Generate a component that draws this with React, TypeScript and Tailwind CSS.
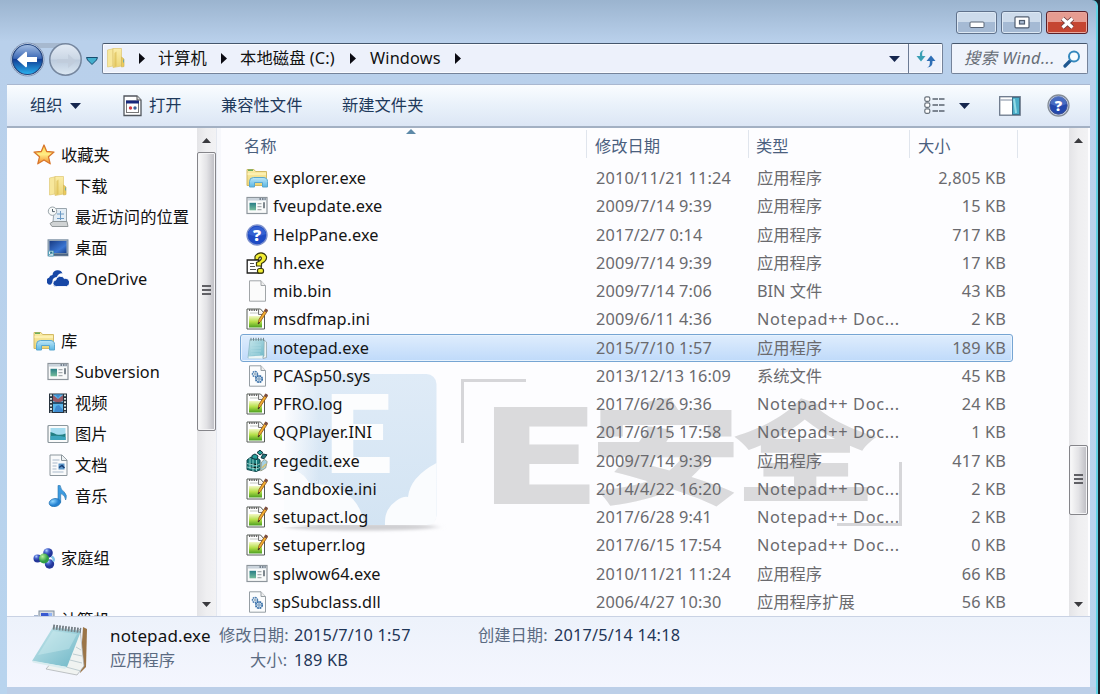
import React from "react";

type IconProps = { kind: string };

function Icon({ kind }: IconProps) {
  const p = { width: 22, height: 22, viewBox: "0 0 22 22", className: "shrink-0 block" };
  switch (kind) {
    case "star":
      return (
        <svg {...p}>
          <path d="M11 1l2.700 6.500 7.300.6-5.500 4.700 1.700 7-6.200-3.800-6.200 3.800 1.700-7L1 8.100l7.300-.6z" fill="url(#gStar)" stroke="#d8762c" strokeWidth="1.300" strokeLinejoin="round" />
        </svg>
      );
    case "folder":
      return (
        <svg {...p}>
          <path d="M2.500 3L8 1.800V19l-5.500 1z" fill="#f7e79c" stroke="#e0ca78" strokeWidth=".7" />
          <path d="M8 1.500h8.500V19L8 20.500z" fill="url(#gFold)" stroke="#dfc670" strokeWidth=".7" />
          <path d="M9.500 6l2-1.500v14.500l-2 1z" fill="#d9b94c" opacity=".6" />
          <path d="M16.500 10l2.500 2v7.500l-2.500.5z" fill="#eccb5b" stroke="#d2b659" strokeWidth=".7" />
          <path d="M18.500 12.500v3" stroke="#6fa9a4" strokeWidth="1" />
        </svg>
      );
    case "recent":
      return (
        <svg {...p}>
          <path d="M7 2.500h12.500v14H6z" fill="#e3edf5" stroke="#9aa5ad" />
          <path d="M10 8h7M10 12.500h7M13.500 5v9" stroke="#6d9ac4" fill="none" />
          <path d="M3 17.500l3-2h14l1 5H5z" fill="#d0d3d4" stroke="#92989a" />
          <circle cx="5.500" cy="5.200" r="4.200" fill="#f8fafa" stroke="#98a3a9" />
          <path d="M5.500 3V5.600H7.800" fill="none" stroke="#52616c" />
        </svg>
      );
    case "desktop":
      return (
        <svg {...p}>
          <rect x="1" y="2.800" width="20" height="16" fill="#9aaabb" stroke="#8094a8" />
          <rect x="2.500" y="4" width="17" height="12" fill="url(#gDesk)" />
          <rect x="1" y="16.500" width="20" height="2.200" fill="#4d6584" />
          <path d="M1.500 14h5v5h-5z" fill="#e8f4fa" stroke="#5aa2ba" />
          <path d="M2.500 17.800L5 15.300m-2 0h2v2" stroke="#1b6b88" fill="none" />
        </svg>
      );
    case "onedrive":
      return (
        <svg {...p}>
          <path d="M4 16.500A3.500 3.500 0 012 9.800 4 4 0 015.500 7a5.200 5.200 0 0110-1.500 4.600 4.600 0 00-5.500 3.300C6.300 9.300 5.200 12 5.500 14z" fill="#1747a6" />
          <path d="M9.500 18.500a3.200 3.200 0 01-.7-6.400 4.600 4.600 0 018.500-1.600 4 4 0 012.200 8z" fill="#1747a6" stroke="#fdfdff" strokeWidth=".9" />
        </svg>
      );
    case "library":
      return (
        <svg {...p}>
          <path d="M1 2.500h7l1.500 2H20.500V18.500H1z" fill="url(#gFold)" stroke="#d3ba66" />
          <path d="M2 3.200h5" stroke="#6fae5c" strokeWidth="1.600" />
          <path d="M1.500 7h18.500" stroke="#fff3bb" strokeWidth="1.500" />
          <path d="M3.500 20v-5.500Q3.500 10.500 7.500 10.500h9.500q4.500 0 4.500 4V20h-5v-4.500H8.500V20z" fill="url(#gBlue)" stroke="#5aa7cf" strokeWidth="1" />
        </svg>
      );
    case "app":
      return (
        <svg {...p}>
          <rect x="1" y="2.500" width="20" height="16" fill="#f9fafa" stroke="#8d959c" strokeWidth="1.200" />
          <path d="M2 4.300h18" stroke="#c9d2db" strokeWidth="2.500" />
          <path d="M13.500 4h1.500M16 4h1.500M18.500 4h1.200" stroke="#5c6878" strokeWidth="1.500" />
          <rect x="3.500" y="7.800" width="6.500" height="7.500" fill="url(#gTeal)" />
          <path d="M11.500 8.700h4M11.500 11.700h4M11.500 14.700h4" stroke="#a8adb0" strokeWidth="1.200" />
          <path d="M18 7.200v6" stroke="#54606a" strokeWidth="1.500" />
        </svg>
      );
    case "video":
      return (
        <svg {...p}>
          <rect x="2" y="1.500" width="18" height="19.500" fill="#28333e" />
          <rect x="6" y="2.500" width="10" height="17.500" fill="#5bb5e8" />
          <path d="M6 3l5 4 5-4v6l-5 2-5-2z" fill="#985a66" />
          <path d="M8 2.500h6l-3 3.500zM7 20l2-6 3-1 4 5v2z" fill="#3f8bd0" />
          <path d="M6 11h10" stroke="#173752" strokeWidth="1.500" />
          <path d="M4 2.500v18M18 2.500v18" stroke="#dce7e5" strokeWidth="2" strokeDasharray="1.800 1.600" />
        </svg>
      );
    case "picture":
      return (
        <svg {...p}>
          <rect x="1" y="2.500" width="20" height="17" rx="1" fill="#fafbfb" stroke="#8b969c" strokeWidth="1.200" />
          <rect x="3.500" y="5" width="15" height="12" fill="#a5dcf0" />
          <path d="M3.500 9q4 1 6 2.500 5 1 9-1V17h-15z" fill="#237f83" />
          <path d="M3.500 13q7-1 15 1v3h-15z" fill="#3da5bd" />
        </svg>
      );
    case "document":
      return (
        <svg {...p}>
          <path d="M3 1h12l5 5v15.500H3z" fill="#f9fafb" stroke="#8c969d" />
          <path d="M14.500 1v5.500H20" fill="#edf1f3" stroke="#8c969d" />
          <path d="M5.500 6h7M5.500 9h5M5.500 12h4M5.500 15h4M5.500 18h11" stroke="#a9b9cb" />
          <path d="M11.500 9.500h6v6h-6z" fill="#5d97c9" />
          <path d="M12 13.500l3-2 2.500 2.500" stroke="#173d75" strokeWidth="1.500" fill="none" />
        </svg>
      );
    case "music":
      return (
        <svg {...p}>
          <path d="M11 .5h2.200q.5 4 4 6.500 3.500 3 1.500 8-.5-5-5-6.500V17.500H11z" fill="#3d9be0" stroke="#2b76ad" strokeWidth=".6" />
          <ellipse cx="7.800" cy="17.500" rx="5.700" ry="4" fill="url(#gNote)" stroke="#2373b5" strokeWidth=".7" transform="rotate(-12 8 17.500)" />
        </svg>
      );
    case "homegroup":
      return (
        <svg {...p}>
          <circle cx="4.500" cy="11.500" r="4" fill="url(#gBall)" />
          <circle cx="15" cy="6" r="4.800" fill="url(#gBall)" />
          <circle cx="16.500" cy="17" r="4.700" fill="url(#gBall)" />
          <path d="M18.500 9.500q3.500 2 1.500 5" stroke="#7fc3e6" strokeWidth="2.500" fill="none" />
          <circle cx="11" cy="11.500" r="5" fill="url(#gGreen)" />
        </svg>
      );
    case "computer":
      return (
        <svg {...p}>
          <rect x="6" y="2" width="15" height="12" fill="#d7dce2" stroke="#7d8b9c" />
          <rect x="8" y="4" width="11" height="9" fill="#3859d1" />
          <path d="M15 4h4v9h-2z" fill="#90b3f4" />
          <path d="M1 6h4v10H1z" fill="#a5b5d0" />
        </svg>
      );
    case "help":
      return (
        <svg {...p}>
          <circle cx="11" cy="11" r="10" fill="#1f4bc4" stroke="#7c90cc" strokeWidth="1.400" />
          <path d="M2 10a9.200 9.200 0 0118 0q-9 4-18 0z" fill="#4675de" opacity=".55" />
          <text x="11" y="17" textAnchor="middle" fontFamily="Open Sans, sans-serif" fontWeight="800" fontSize="16" fill="#fff">?</text>
        </svg>
      );
    case "hh":
      return (
        <svg {...p}>
          <path d="M1.200 8h11l3 3v10h-14z" fill="#fff" stroke="#202020" strokeWidth="1.300" />
          <path d="M4 11.500h4M4 14.500h5M4 17.500h6" stroke="#555" />
          <path d="M9 7.500V4.500q2-3.700 6-3.700t5.500 4q.5 4-5 6.700v2.500h-5v-3.500q5.500-2.500 4.800-4.800-1-1.800-2.500.5v1.300z" fill="#f2ee34" stroke="#3b3a10" strokeWidth="1.200" />
          <rect x="11.500" y="16.500" width="6" height="4.700" rx="2" fill="#f2ee34" stroke="#34340c" strokeWidth="1.200" />
        </svg>
      );
    case "blank":
      return (
        <svg {...p}>
          <path d="M3.500 .8h11.500l4.500 4.700V21.200h-16z" fill="#fbfbfb" stroke="#a1a5a8" />
          <path d="M15 .8v4.700h4.500" fill="#eee" stroke="#a1a5a8" />
        </svg>
      );
    case "npp":
      return (
        <svg {...p}>
          <path d="M1 1h13.500l4 4.500v15.500H1z" fill="#fff" stroke="#565c57" />
          <path d="M3 2h10" stroke="#666" strokeWidth="2" strokeDasharray="1.300 1" />
          <path d="M4 5h8" stroke="#c3c8c4" />
          <path d="M12.500 1v5.500h5" fill="#eee" stroke="#777" />
          <path d="M3 8h13v11.500H3z" fill="url(#gNpp)" />
          <path d="M12 16l1-4.500L19.500 1l2.300 1.500L14.500 13.500z" fill="#f3ae30" stroke="#88501c" strokeWidth=".8" />
          <path d="M18.300 3.300l1.500-2.800 2 1.400-1.500 2.700z" fill="#744b4b" />
          <path d="M12 16.500l.7-2.500 1.500.8z" fill="#222" />
        </svg>
      );
    case "notepad":
      return (
        <svg {...p}>
          <path d="M18 3l2.500 2v15.500L17 21.500z" fill="#eef1f0" stroke="#8c9ea1" strokeWidth=".7" />
          <path d="M4 2.500h14V19l-3 2H2z" fill="url(#gPad)" stroke="#8cb9c4" strokeWidth=".8" />
          <path d="M5 .8v3M7.500 .8v3M10 .8v3M12.500 .8v3M15 .8v3M17.500 .8v3" stroke="#73858a" strokeWidth="1" />
          <path d="M5 8h10M5 11h10M5 14h10M5 17h9" stroke="#b9e0e8" strokeWidth=".6" />
          <path d="M2.500 19.500l14.500-1-1 3H2.500z" fill="#edf5f5" />
        </svg>
      );
    case "gear":
      return (
        <svg {...p}>
          <path d="M3.500 .8h11.500l4.500 4.700V21.200h-16z" fill="#fbfcfd" stroke="#969ea4" />
          <path d="M15 .8v4.700h4.500" fill="#eee" stroke="#969ea4" />
          <circle cx="9" cy="9" r="2.500" fill="#eaf2f8" stroke="#4c7db0" strokeWidth="1.500" strokeDasharray="1.700 .6" />
          <circle cx="9" cy="9" r=".8" fill="#476985" />
          <circle cx="13" cy="14" r="3.200" fill="#dce9f4" stroke="#346ca5" strokeWidth="1.700" strokeDasharray="1.900 .6" />
          <circle cx="13" cy="14" r="1.200" fill="#fff" stroke="#3d6e9e" strokeWidth=".8" />
        </svg>
      );
    case "regedit":
      return (
        <svg {...p}>
          <path d="M1 10l4-3 6 1 3 2v10l-4 1.500-9-2z" fill="#197b7b" stroke="#12494d" />
          <path d="M1 13.500l9 2 4-1.500M1 17l9 2 4-1.500M4 8v11M7 9v12M10.500 10v11" stroke="#a9ebe2" strokeWidth=".8" />
          <path d="M6 5.500l3-1.500 3 2-1 3.500-5-1zM11 2.500l3-2.300 3 2.500-3 2.300z" fill="#27a09b" stroke="#12343d" />
          <path d="M17 4l4 .8-3 4-3-1z" fill="#247980" stroke="#12343d" />
          <path d="M15.500 12l3-2.500 2.700 2-1.500 6.500-5 3z" fill="#a5d0e2" stroke="#8b927a" strokeWidth=".8" />
          <path d="M16 18l4-4" stroke="#d8bf6a" strokeWidth="1.500" />
        </svg>
      );
    default:
      return null;
  }
}

function Gradients() {
  return (
    <svg width="0" height="0" className="absolute">
      <defs>
        <linearGradient id="gStar" x2="0" y2="1"><stop offset="0" stopColor="#ffd94a" /><stop offset=".5" stopColor="#ffed85" /><stop offset="1" stopColor="#f28a2b" /></linearGradient>
        <linearGradient id="gFold" x2="0" y2="1"><stop stopColor="#fbeda8" /><stop offset="1" stopColor="#ecd576" /></linearGradient>
        <linearGradient id="gDesk" x2="1" y2="1"><stop stopColor="#183b83" /><stop offset=".65" stopColor="#3b76d3" /><stop offset="1" stopColor="#173f8c" /></linearGradient>
        <linearGradient id="gBlue" x2="0" y2="1"><stop stopColor="#bde7f8" /><stop offset="1" stopColor="#5bb6e3" /></linearGradient>
        <linearGradient id="gTeal" x2="0" y2="1"><stop stopColor="#287d86" /><stop offset="1" stopColor="#76bd9b" /></linearGradient>
        <radialGradient id="gNote" cx=".35" cy=".3"><stop stopColor="#8ed5ff" /><stop offset="1" stopColor="#2482d2" /></radialGradient>
        <radialGradient id="gBall" cx=".35" cy=".25"><stop stopColor="#b5d0ff" /><stop offset=".5" stopColor="#4562cc" /><stop offset="1" stopColor="#24379a" /></radialGradient>
        <radialGradient id="gGreen" cx=".35" cy=".3"><stop stopColor="#b8f09a" /><stop offset="1" stopColor="#2f9e45" /></radialGradient>
        <linearGradient id="gNpp" x2="0" y2="1"><stop stopColor="#f4f8c4" /><stop offset=".5" stopColor="#b4df48" /><stop offset="1" stopColor="#4b9f20" /></linearGradient>
        <linearGradient id="gPad" x2="1" y2="1"><stop stopColor="#c9e8ed" /><stop offset="1" stopColor="#6db6c6" /></linearGradient>
        <linearGradient id="gBack" x2="0" y2="1"><stop stopColor="#a5bfe4" /><stop offset=".46" stopColor="#3d69b6" /><stop offset=".5" stopColor="#123e96" /><stop offset="1" stopColor="#29b3f0" /></linearGradient>
        <linearGradient id="gFwd" x2="0" y2="1"><stop stopColor="#e3ebf5" /><stop offset=".48" stopColor="#cbd7e5" /><stop offset=".52" stopColor="#bccbdd" /><stop offset="1" stopColor="#dce8f3" /></linearGradient>
        <linearGradient id="gLogo" x2="0" y2="1"><stop stopColor="#dfebf7" /><stop offset="1" stopColor="#d3e4f3" /></linearGradient>
        <linearGradient id="gFade" x2="1" y2="0"><stop offset="0" stopColor="#fdfdff" /><stop offset="1" stopColor="#fdfdff" stopOpacity="0" /></linearGradient>
        <filter id="soft" x="-20%" y="-200%" width="140%" height="500%"><feGaussianBlur stdDeviation="5 1.500" /></filter>
      </defs>
    </svg>
  );
}

const sidebar: [string, string, boolean][] = [
  ["star", "收藏夹", false],
  ["folder", "下载", true],
  ["recent", "最近访问的位置", true],
  ["desktop", "桌面", true],
  ["onedrive", "OneDrive", true],
  ["", "", false],
  ["library", "库", false],
  ["app", "Subversion", true],
  ["video", "视频", true],
  ["picture", "图片", true],
  ["document", "文档", true],
  ["music", "音乐", true],
  ["", "", false],
  ["homegroup", "家庭组", false],
  ["", "", false],
  ["computer", "计算机", false],
];

const NPP = "Notepad++ Doc...";
const files: [string, string, string, string, string][] = [
  ["library", "explorer.exe", "2010/11/21 11:24", "应用程序", "2,805 KB"],
  ["app", "fveupdate.exe", "2009/7/14 9:39", "应用程序", "15 KB"],
  ["help", "HelpPane.exe", "2017/2/7 0:14", "应用程序", "717 KB"],
  ["hh", "hh.exe", "2009/7/14 9:39", "应用程序", "17 KB"],
  ["blank", "mib.bin", "2009/7/14 7:06", "BIN 文件", "43 KB"],
  ["npp", "msdfmap.ini", "2009/6/11 4:36", NPP, "2 KB"],
  ["notepad", "notepad.exe", "2015/7/10 1:57", "应用程序", "189 KB"],
  ["gear", "PCASp50.sys", "2013/12/13 16:09", "系统文件", "45 KB"],
  ["npp", "PFRO.log", "2017/6/26 9:36", NPP, "24 KB"],
  ["npp", "QQPlayer.INI", "2017/6/15 17:58", NPP, "1 KB"],
  ["regedit", "regedit.exe", "2009/7/14 9:39", "应用程序", "417 KB"],
  ["npp", "Sandboxie.ini", "2014/4/22 16:20", NPP, "2 KB"],
  ["npp", "setupact.log", "2017/6/28 9:41", NPP, "2 KB"],
  ["npp", "setuperr.log", "2017/6/15 17:54", NPP, "0 KB"],
  ["app", "splwow64.exe", "2010/11/21 11:24", "应用程序", "66 KB"],
  ["gear", "spSubclass.dll", "2006/4/27 10:30", "应用程序扩展", "56 KB"],
];

function Right() {
  return <svg width="6" height="11" viewBox="0 0 6 11" className="shrink-0"><path d="M0 0l6 5.500L0 11z" fill="#0b0b12" /></svg>;
}

function Down() {
  return <svg width="11" height="6" viewBox="0 0 11 6" className="shrink-0"><path d="M0 0h11L5.500 6z" fill="#15264e" /></svg>;
}

function Arrow({ up }: { up?: boolean }) {
  return <svg width="9" height="5" viewBox="0 0 9 5"><path d={up ? "M0 5h9L4.500 0z" : "M0 0h9L4.500 5z"} fill="#3a3a3e" /></svg>;
}

function ScrollBar({ before, thumb }: { before: string; thumb: string }) {
  return (
    <div className="flex h-full w-[19px] shrink-0 flex-col items-center bg-gradient-to-r from-[#e4e4e7] via-[#efeff1] to-[#f2f2f4]">
      <div className="flex h-[24px] shrink-0 items-center"><Arrow up /></div>
      <div className={before} />
      <div className={"flex w-[19px] shrink-0 items-center justify-center rounded-[2px] border border-[#85858a] bg-gradient-to-r from-[#fafafa] via-[#e3e3e6] to-[#bcbcc2] shadow-[inset_0_0_0_1px_#f4f4f6] " + thumb}>
        <div className="-mt-[3px] flex w-[9px] flex-col gap-[2px]">
          <div className="h-[2px] bg-[#606065]" />
          <div className="h-[2px] bg-[#606065]" />
          <div className="h-[2px] bg-[#606065]" />
        </div>
      </div>
      <div className="grow" />
      <div className="flex h-[24px] shrink-0 items-center"><Arrow /></div>
    </div>
  );
}

function Watermark() {
  return (
    <svg className="absolute left-0 top-0" width="848" height="488" viewBox="221 128 848 488">
      <ellipse cx="361" cy="527" rx="76" ry="3.500" fill="#cfcfd2" filter="url(#soft)" />
      <rect x="285" y="374" width="151.500" height="151" rx="10" fill="url(#gLogo)" />
      <rect x="283" y="372" width="36" height="155" fill="url(#gFade)" />
      <text transform="translate(321.500 473) scale(1.13 1)" fontFamily="Noto Sans CJK SC, sans-serif" fontWeight="900" fontSize="106" fill="#fcfdfe">E</text>
      <path d="M284 468q20 2 26 17 19-3 32 6 18 9 23 34h-81zM385 525q-1-16 11-24 7-5 12-4 2-20 28.500-34v52q0 10-10 10z" fill="#fafcfe" />
      <path d="M462.500 443V380.500H526M837 524.500h63.500V462" fill="none" stroke="#d6d6d9" strokeWidth="3" />
      <g fill="#dadadc" fontFamily="Noto Sans CJK SC, sans-serif" fontWeight="900">
        <text transform="translate(477 504) scale(1.520 1)" fontSize="130">E</text>
        <text transform="translate(590 494.500) scale(1.350 1)" fontSize="112">安</text>
        <text transform="translate(733 493) scale(1.290 .97)" fontSize="112">全</text>
      </g>
    </svg>
  );
}

const cols = "grid grid-cols-[355px_161px_161px_88px]";

export default function App() {
  return (
    <div className="relative flex h-[694px] w-[1100px] overflow-hidden bg-[#17222c] font-['Noto_Sans','Noto_Sans_CJK_SC',sans-serif] text-[16.3px] leading-[28px] text-[#111]">
      <Gradients />
      <div className="flex w-[1098px] flex-col overflow-hidden rounded-tr-[6px] border-r-2 border-[#63d2e4] bg-gradient-to-b from-[#9bb4cf] from-0% via-[#b9d0eb] via-[6%] to-[#b8d4ee] pl-[7px]">
        <div className="flex h-[43px] shrink-0 items-start justify-end gap-[4px] pr-[8px] pt-[11px]">
          <div className="flex h-[23px] w-[41px] items-center justify-center rounded-[3px] border border-[#60728c] bg-gradient-to-b from-[#cddbeb] from-50% to-[#a5bad4] to-50% shadow-[inset_0_0_0_1px_#dce8f4]">
            <svg width="16" height="8" viewBox="0 0 16 8" className="mt-1"><rect x="1" y="1" width="14" height="5.500" rx="1" fill="#fff" stroke="#586475" /></svg>
          </div>
          <div className="flex h-[23px] w-[41px] items-center justify-center rounded-[3px] border border-[#60728c] bg-gradient-to-b from-[#cddbeb] from-50% to-[#a5bad4] to-50% shadow-[inset_0_0_0_1px_#dce8f4]">
            <svg width="16" height="13" viewBox="0 0 16 13"><rect x="1" y=".8" width="14" height="11" rx="1" fill="#fff" stroke="#505d70" strokeWidth="1.200" /><rect x="5.500" y="4.500" width="5" height="3.500" fill="#a9bbd2" stroke="#505d70" strokeWidth="1.200" /></svg>
          </div>
          <div className="flex h-[23px] w-[42px] items-center justify-center rounded-[3px] border border-[#5a2029] bg-gradient-to-b from-[#e69c91] from-50% to-[#c54531] to-50% shadow-[inset_0_0_0_1px_#e8a79d]">
            <svg width="17" height="14" viewBox="0 0 17 14"><path d="M3.500 2.500l10 9M13.500 2.500l-10 9" stroke="#6f3b3b" strokeWidth="5" /><path d="M3.500 2.500l10 9M13.500 2.500l-10 9" stroke="#fff" strokeWidth="3.200" /></svg>
          </div>
        </div>

        <div className="flex h-[41px] shrink-0 items-start">
          <svg width="95" height="38" viewBox="7 40 95 38" className="-mt-[3px] shrink-0">
            <path d="M27 43h39v5H27z" fill="#a7b9cf" />
            <circle cx="27.500" cy="59.500" r="16.500" fill="#dce7f3" stroke="#8295b5" />
            <circle cx="27.500" cy="59.500" r="15" fill="url(#gBack)" stroke="#23457f" strokeWidth="1.200" />
            <path d="M17 59.500l9-8 1 1v4.500h10v5H27v4.500l-1 1z" fill="#fff" />
            <circle cx="65.500" cy="59.500" r="15.700" fill="url(#gFwd)" stroke="#75869e" strokeWidth="1.500" />
            <path d="M57 59h11v-5l8 7-8 7v-5H57z" fill="#c0ccdb" opacity=".8" />
            <path d="M86.500 57.500h11l-1 2.500-4.500 4.500-4.500-4.500z" fill="#43afce" stroke="#174d70" />
          </svg>
          <div className="flex h-[31px] w-[841px] shrink-0 items-center rounded-[2px] border border-[#75839a] border-t-[#45566c] bg-[#edf1fb] shadow-[inset_0_0_0_1px_#f9fbff]">
            <div className="flex h-[31px] w-[36px] items-center pb-[2px] pl-[2px]"><Icon kind="folder" /></div>
            <Right />
            <span className="ml-[13px] w-[63px] whitespace-nowrap pb-[2px]">计算机</span>
            <Right />
            <span className="ml-[13px] w-[112px] whitespace-nowrap pb-[2px] tracking-[0.1px]">本地磁盘 (C:)</span>
            <div className="-ml-[2px] flex"><Right /></div>
            <span className="ml-[14px] w-[85px] whitespace-nowrap pb-[2px] tracking-[0.15px]">Windows</span>
            <Right />
            <div className="grow" />
            <div className="mr-[8px] flex"><Down /></div>
            <div className="flex h-[29px] w-[34px] items-center justify-center border-l border-[#6b7a94]">
              <svg width="20" height="18" viewBox="0 0 20 18"><path d="M8 0Q5.500 1.500 6.300 6H9.500L5 11.500.5 6H4Q3 .8 8 0z" fill="#3a9fb4" /><path d="M11 17.500q3.500-1 2.800-6.500h-3.300L15 5.500l4.500 5.500h-3q.5 6-5.500 6.500z" fill="#2e6eb5" /></svg>
            </div>
          </div>
          <div className="ml-[8px] flex h-[31px] w-[137px] shrink-0 items-center rounded-[2px] border border-[#75839a] border-t-[#45566c] bg-[#f0f4fc] pl-[12px]">
            <span className="w-[99px] whitespace-nowrap pb-px italic tracking-[0.45px] text-[#676d76]">搜索 Wind...</span>
            <svg width="18" height="18" viewBox="0 0 18 18"><path d="M2 16l6-6" stroke="#1e5790" strokeWidth="3.200" strokeLinecap="round" /><circle cx="11" cy="6.500" r="5" fill="#f8fcff" stroke="#3588bd" strokeWidth="2" /></svg>
          </div>
        </div>

        <div className="flex h-[44px] w-[1083px] shrink-0 items-center border-b-2 border-t border-b-[#a3b0c3] border-t-[#a9b8d0] bg-gradient-to-b from-[#fafdff] via-[#e9f1fa] via-50% to-[#dce6f5] text-[#1e395b]">
          <span className="ml-[23px] w-[40px] whitespace-nowrap pb-px">组织</span>
          <Down />
          <svg width="19" height="22" viewBox="0 0 19 22" className="ml-[42px] shrink-0"><path d="M1 1h13l4 4v15.500H1z" fill="#fff" stroke="#51565d" strokeWidth="1.300" /><path d="M14 1v4h4" fill="#ddd" stroke="#555" /><rect x="3.500" y="6" width="12" height="11.500" fill="#fff" stroke="#777" /><path d="M3 7h13" stroke="#17287c" strokeWidth="3" /><circle cx="7.500" cy="13" r="1.700" fill="#d03b47" /><circle cx="12" cy="13" r="1.700" fill="#3b6097" /></svg>
          <span className="ml-[7px] w-[72px] whitespace-nowrap pb-px">打开</span>
          <span className="w-[121px] whitespace-nowrap pb-px">兼容性文件</span>
          <span className="whitespace-nowrap pb-px">新建文件夹</span>
          <div className="grow" />
          <svg width="21" height="18" viewBox="0 0 21 18" className="-mt-[2px]"><g fill="#fff" stroke="#69727c" strokeWidth="1.200"><rect x=".8" y=".8" width="5" height="4.500" rx="1.500" /><rect x=".8" y="6.800" width="5" height="4.500" rx="1.500" /><rect x=".8" y="12.800" width="5" height="4.500" rx="1.500" /></g><path d="M8.500 3h12M8.500 9h12M8.500 15h12" stroke="#59636f" strokeWidth="1.500" strokeDasharray="5.500 1" /></svg>
          <div className="ml-[14px] mr-[29px] flex"><Down /></div>
          <svg width="22" height="20" viewBox="0 0 22 20"><rect x=".7" y=".7" width="20.500" height="18.500" fill="#fff" stroke="#6b788a" strokeWidth="1.300" /><path d="M1 4h13" stroke="#a8b2bf" strokeWidth="1.500" /><rect x="13.500" y="1.500" width="7" height="17" fill="#4aaec8" stroke="#3e718b" /><path d="M15 3l2 14" stroke="#93dbe6" strokeWidth="2" /></svg>
          <svg width="23" height="23" viewBox="0 0 23 23" className="-mt-px ml-[26px] mr-[20px]"><circle cx="11.500" cy="11.500" r="10.500" fill="#d2dced" stroke="#858d98" strokeWidth="1.300" /><circle cx="11.500" cy="11.500" r="8.700" fill="#2348ad" stroke="#3b4e91" /><path d="M3.500 10a8 8 0 0116 0q-8 4-16 0z" fill="#6b8fd8" opacity=".5" /><text x="11.500" y="17" textAnchor="middle" fontFamily="Open Sans, sans-serif" fontWeight="800" fontSize="14.500" fill="#fff">?</text></svg>
        </div>

        <div className="flex h-[488px] w-[1083px] shrink-0 overflow-hidden bg-[#fdfdff]">
          <div className="flex w-[190px] shrink-0 flex-col overflow-hidden pt-[11px]">
            {sidebar.map(([icon, label, child], i) => (
              <div key={i} className={"flex h-[31px] shrink-0 items-center gap-[6px] whitespace-nowrap " + (child ? "pl-[40px]" : "pl-[26px]")}>
                {icon && <Icon kind={icon} />}
                <span>{label}</span>
              </div>
            ))}
          </div>
          <ScrollBar before="h-0" thumb="h-[279px]" />
          <div className="w-[5px] shrink-0 border-l border-[#e4e8f0] bg-[#f7f8fc]" />
          <div className="relative flex w-[848px] shrink-0 flex-col">
            <Watermark />
            <svg width="10" height="5" viewBox="0 0 10 5" className="absolute left-[185px] top-[1px]"><path d="M0 5h10L5 0z" fill="#5e8aa8" /></svg>
            <div className="relative flex h-[32px] shrink-0 items-center bg-transparent text-[#4b607e]">
              <div className="h-[28px] w-[366px] border-r border-[#e0e5ed] pl-[23px] pt-[2px]">名称</div>
              <div className="h-[28px] w-[162px] border-r border-[#e0e5ed] pl-[8px] pt-[2px]">修改日期</div>
              <div className="h-[28px] w-[161px] border-r border-[#e0e5ed] pl-[7px] pt-[2px]">类型</div>
              <div className="h-[28px] w-[108px] border-r border-[#e0e5ed] pl-[8px] pt-[2px]">大小</div>
            </div>
            <div className="relative flex flex-col pl-[19px] pt-[4.2px]">
              {files.map(([icon, name, date, type, size], i) => (
                <div
                  key={name}
                  className={
                    cols + " h-[28.25px] w-[773px] shrink-0 items-center whitespace-nowrap rounded-[3px] border text-[#6a6a6e] " +
                    (i === 6 ? "border-[#76a5d3] bg-gradient-to-b from-[#dfedfd] to-[#bfdafa] shadow-[inset_0_0_0_1px_#e8f3fe]" : "border-transparent")
                  }
                >
                  <div className="-mt-px flex items-center gap-[5px] pl-[5px] text-[#141414]">
                    <Icon kind={icon} />
                    <span className="tracking-[0.1px]">{name}</span>
                  </div>
                  <span className="-mt-px tracking-[0.15px]">{date}</span>
                  <span className={type === NPP ? "-mt-px tracking-[0.68px]" : "-mt-px"}>{type}</span>
                  <span className="-mt-px text-right tracking-[0.15px]">{size}</span>
                </div>
              ))}
            </div>
          </div>
          <ScrollBar before="h-[293px]" thumb="h-[70px]" />
        </div>

        <div className="flex h-[71px] w-[1083px] shrink-0 border-t border-[#c9d2e4] bg-gradient-to-b from-[#edf2fb] to-[#f4f6fe]">
          <svg width="60" height="58" viewBox="0 0 60 58" className="ml-[24px] mt-[6px] shrink-0">
            <path d="M52 4l4 2-1 38-6 6z" fill="#9b7547" />
            <path d="M49 6l4 37-7 9-31-6z" fill="#f0f3f1" stroke="#a6abad" strokeWidth=".7" />
            <path d="M45 24l5 3M42 31l9 2M39 37l12 3M35 44l15 4" stroke="#bfcdd1" />
            <path d="M22 4l28 4-14 36L1 38z" fill="url(#gPad)" />
            <path d="M22 8l24 3-8 15-31 6z" fill="#d5f0f3" opacity=".4" />
            <path d="M22 4l28 3.500" stroke="#747e84" strokeWidth="5" strokeDasharray="1.800 1.200" />
            <path d="M1 37.500l35 6.500-2 2L2 39.500z" fill="#d9ecef" />
          </svg>
          <div className="ml-[19px] flex w-[102px] flex-col pt-[5.500px] leading-[25px]">
            <span className="whitespace-nowrap text-[17px] tracking-[0.15px]">notepad.exe</span>
            <span className="whitespace-nowrap text-[#5b6b82]">应用程序</span>
          </div>
          <div className="ml-[7px] grid grid-cols-[75px_184px_76px_auto] content-start pt-[6px] leading-[25px] text-[#1f3657]">
            <span className="whitespace-nowrap pr-[7px] text-right text-[#5b6b82]">修改日期:</span>
            <span className="whitespace-nowrap tracking-[0.2px]">2015/7/10 1:57</span>
            <span className="whitespace-nowrap pr-[7px] text-right text-[#5b6b82]">创建日期:</span>
            <span className="whitespace-nowrap tracking-[0.2px]">2017/5/14 14:18</span>
            <span className="whitespace-nowrap pr-[7px] text-right text-[#5b6b82]">大小:</span>
            <span className="whitespace-nowrap tracking-[0.2px]">189 KB</span>
          </div>
        </div>
        <div className="grow bg-[#bccfe8]" />
      </div>
    </div>
  );
}
